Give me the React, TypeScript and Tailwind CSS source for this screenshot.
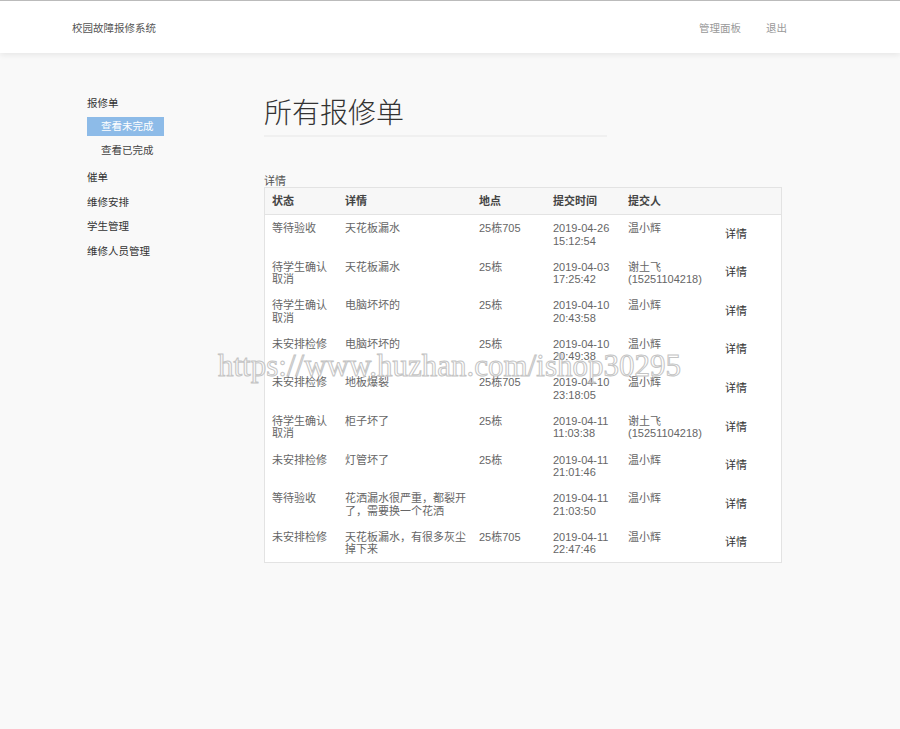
import React from 'react'

const font = { fontFamily: '"Liberation Sans", "Noto Sans CJK SC", sans-serif' }

const rows = [
  { status: '等待验收', detail: '天花板漏水', place: '25栋705', date: '2019-04-26', time: '15:12:54', user: '温小辉' },
  { status: '待学生确认取消', detail: '天花板漏水', place: '25栋', date: '2019-04-03', time: '17:25:42', user: '谢土飞 (15251104218)' },
  { status: '待学生确认取消', detail: '电脑坏坏的', place: '25栋', date: '2019-04-10', time: '20:43:58', user: '温小辉' },
  { status: '未安排检修', detail: '电脑坏坏的', place: '25栋', date: '2019-04-10', time: '20:49:38', user: '温小辉' },
  { status: '未安排检修', detail: '地板爆裂', place: '25栋705', date: '2019-04-10', time: '23:18:05', user: '温小辉' },
  { status: '待学生确认取消', detail: '柜子坏了', place: '25栋', date: '2019-04-11', time: '11:03:38', user: '谢土飞 (15251104218)' },
  { status: '未安排检修', detail: '灯管坏了', place: '25栋', date: '2019-04-11', time: '21:01:46', user: '温小辉' },
  { status: '等待验收', detail: '花洒漏水很严重，都裂开了，需要换一个花洒', place: '', date: '2019-04-11', time: '21:03:50', user: '温小辉' },
  { status: '未安排检修', detail: '天花板漏水，有很多灰尘掉下来', place: '25栋705', date: '2019-04-11', time: '22:47:46', user: '温小辉' },
]

export default function App() {
  return (
    <div style={font} className="relative min-h-[729px] bg-[#f9f9f9] text-[#333]">
      {/* Header */}
      <header className="border-t border-[#bbbbbb] bg-white shadow-[0_2px_6px_rgba(0,0,0,0.08)]">
        <div className="flex h-[52px] items-center pt-[3px] pl-[72px] pr-[113px] text-[10.5px]">
          <span className="text-[#555]">校园故障报修系统</span>
          <div className="ml-auto flex items-center gap-[25px] text-[#999]">
            <span>管理面板</span>
            <span>退出</span>
          </div>
        </div>
      </header>

      <div className="flex pt-[41px] pl-[87px]">
        {/* Sidebar */}
        <aside className="w-[177px] shrink-0 text-[10.5px]">
          <div className="flex h-[20px] items-center">报修单</div>
          <div className="mt-[3px] flex h-[19px] w-[77px] items-center bg-[#8dbbe8] pl-[14px] text-white">
            查看未完成
          </div>
          <div className="mt-[5px] flex h-[19px] items-center pl-[14px] text-[#444]">查看已完成</div>
          <nav className="mt-[6px]">
            {['催单', '维修安排', '学生管理', '维修人员管理'].map((item) => (
              <div key={item} className="flex h-[24.5px] items-center">
                {item}
              </div>
            ))}
          </nav>
        </aside>

        {/* Main */}
        <main className="mt-[3px] w-[518px]">
          <h1 className="text-[28px] font-light leading-[34px] text-[#333]">所有报修单</h1>
          <div className="mt-[4px] h-[2px] w-[343px] bg-[#f0f0f0]" />

          <div className="mt-[38px] text-[11px] leading-[12px] text-[#555]">详情</div>
          <div className="border border-[#e3e3e3] bg-white">
            <table className="w-full table-fixed border-collapse text-[11px] leading-[12.5px]">
              <colgroup>
                <col className="w-[73px]" />
                <col className="w-[134px]" />
                <col className="w-[74px]" />
                <col className="w-[75px]" />
                <col className="w-[97px]" />
                <col />
              </colgroup>
              <thead>
                <tr className="h-[26px] border-b border-[#e3e3e3] bg-[#f7f7f7] text-left">
                  <th className="pl-[7px] font-bold text-[#444]">状态</th>
                  <th className="pl-[7px] font-bold text-[#444]">详情</th>
                  <th className="pl-[7px] font-bold text-[#444]">地点</th>
                  <th className="pl-[7px] font-bold text-[#444]">提交时间</th>
                  <th className="pl-[7px] font-bold text-[#444]">提交人</th>
                  <th />
                </tr>
              </thead>
              <tbody className="text-[#666]">
                {rows.map((r, i) => (
                  <tr key={i}>
                    <td className="pt-[7.5px] pb-[6.1px] pl-[7px] pr-[6px] align-top">{r.status}</td>
                    <td className="pt-[7.5px] pb-[6.1px] pl-[7px] pr-[2px] align-top">{r.detail}</td>
                    <td className="pt-[7.5px] pb-[6.1px] pl-[7px] align-top">{r.place}</td>
                    <td className="pt-[7.5px] pb-[6.1px] pl-[7px] align-top">
                      {r.date}
                      <br />
                      {r.time}
                    </td>
                    <td className="pt-[7.5px] pb-[6.1px] pl-[7px] align-top">{r.user}</td>
                    <td className="pl-[7px] align-middle text-[#333]">详情</td>
                  </tr>
                ))}
              </tbody>
            </table>
          </div>
        </main>
      </div>

      {/* watermark */}
      <div className="pointer-events-none absolute left-[218px] top-[347px] font-['Liberation_Serif',serif] text-[31px] leading-[38px] text-transparent [-webkit-text-stroke:1px_#c4c4c4]">
        https://www.huzhan.com/ishop30295
      </div>
    </div>
  )
}
